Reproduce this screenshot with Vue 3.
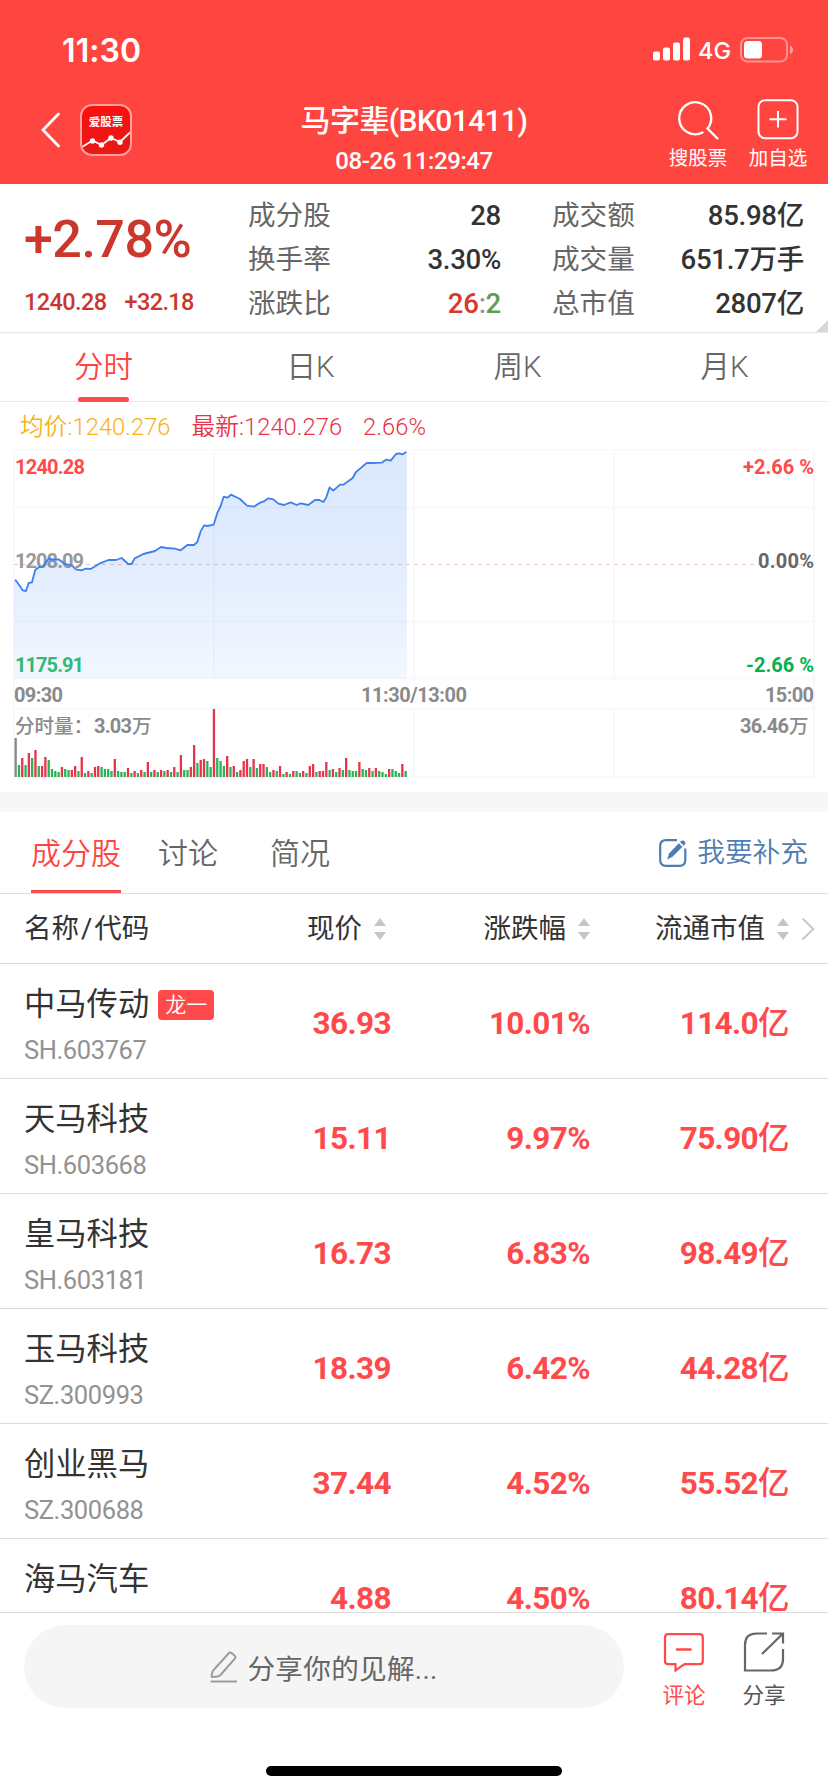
<script setup>
import { ref } from 'vue'

const periods = ['分时', '日K', '周K', '月K']
const period = ref(0)

const sections = ['成分股', '讨论', '简况']
const section = ref(0)

const columns = ['现价', '涨跌幅', '流通市值']

const stocks = [
  { name: '中马传动', tag: '龙一', code: 'SH.603767', price: '36.93', rate: '10.01%', cap: '114.0' },
  { name: '天马科技', code: 'SH.603668', price: '15.11', rate: '9.97%', cap: '75.90' },
  { name: '皇马科技', code: 'SH.603181', price: '16.73', rate: '6.83%', cap: '98.49' },
  { name: '玉马科技', code: 'SZ.300993', price: '18.39', rate: '6.42%', cap: '44.28' },
  { name: '创业黑马', code: 'SZ.300688', price: '37.44', rate: '4.52%', cap: '55.52' },
  { name: '海马汽车', price: '4.88', rate: '4.50%', cap: '80.14' },
]

// price line, in thirds of a pixel
const line = '47,541 58,556 68,571 78,573 86,549 96,547 106,509 118,501 128,500 147,475 160,479 176,478 195,492 215,496 228,508 244,511 258,506 272,507 300,490 325,480 348,480 365,474 385,492 395,492 404,475 430,462 465,453 483,441 500,444 525,446 542,451 562,435 582,435 592,426 602,394 612,376 622,378 641,374 652,339 662,318 671,290 682,293 693,284 720,297 741,317 762,320 780,308 790,305 805,295 820,298 835,311 852,315 872,307 890,315 902,310 925,315 945,300 958,300 970,306 978,294 989,262 1000,272 1020,254 1030,254 1058,234 1068,216 1080,206 1100,189 1118,189 1145,188 1158,179 1172,182 1188,162 1198,160 1208,163 1217,157'
const area = `42,835 42,541 ${line} 1221,157 1221,835`

// one bar a minute: direction + height
const bars = 'n39 g12 r19 g12 r24 g19 r27 g11 r11 r20 g17 g8 g6 g5 r10 g8 g7 r7 r11 g6 r20 g4 r6 g4 r10 r11 g10 g8 g8 g6 r18 g6 g5 g5 r9 g4 r6 g4 r7 g5 r15 g5 r7 g5 r7 g6 r7 g5 r10 g5 r22 g7 g7 r10 r32 g14 r17 r18 g16 g10 r68 g19 g16 g11 r21 g10 r11 g5 r7 r16 r18 g10 r18 g9 r13 r13 g10 g5 r7 g6 r11 g3 r5 g3 r6 g6 g4 r6 g4 r11 r13 g5 r6 r6 r15 g7 r8 g5 r9 g7 r19 g7 g6 g6 r15 g8 g7 r9 g6 r9 g6 g5 g3 r8 g8 g6 g4 r13 g6'
  .split(' ')
  .map((b, i) => ({ x: 14.5 + i * 3.305, dir: b[0], h: Number(b.slice(1)) }))
</script>


<template>
  <div class="page">
    <header class="top">
      <div class="status">
        <span class="clock">11:30</span>
        <svg class="signal" width="38" height="24" viewBox="0 0 38 24" fill="#fff">
          <rect x="0" y="14.5" width="7" height="9" rx="2" />
          <rect x="10" y="10.5" width="7" height="13" rx="2" />
          <rect x="20" y="5.5" width="7" height="18" rx="2" />
          <rect x="30" y="0.5" width="7" height="23" rx="2" />
        </svg>
        <span class="net">4G</span>
        <svg class="battery" width="54" height="26" viewBox="0 0 54 26">
          <rect x="1" y="1" width="46" height="23.5" rx="6.5" fill="none" stroke="#fff" stroke-opacity=".42" stroke-width="2" />
          <rect x="4" y="4" width="18" height="17.5" rx="3.5" fill="#fff" />
          <path d="M50 8.5c4 1.5 4 7 0 8.5z" fill="#fff" fill-opacity=".5" />
        </svg>
      </div>

      <div class="nav">
        <svg class="back" width="20" height="36" viewBox="0 0 20 36">
          <path d="M17.5 2 L2 18 L17.5 34" fill="none" stroke="#fff" stroke-width="2.8" stroke-linecap="round" />
        </svg>
        <div class="logo">
          <span>爱股票</span>
          <svg width="48" height="20" viewBox="0 0 48 20">
            <path d="M0 17 L10.5 10.5 L19.5 15 L29 8 L38 12 L48 2.5" fill="none" stroke="#fff" stroke-width="1.8" />
            <circle cx="10.5" cy="11" r="2.7" fill="#fff" />
            <circle cx="19.5" cy="15" r="2.7" fill="#fff" />
            <circle cx="29" cy="8" r="2.7" fill="#fff" />
            <circle cx="38" cy="12.3" r="2.7" fill="#fff" />
          </svg>
        </div>
        <div class="title">
          <h1>马字辈(BK01411)</h1>
          <p>08-26 11:29:47</p>
        </div>
        <div class="action">
          <svg width="44" height="42" viewBox="0 0 44 42" fill="none" stroke="#fff" stroke-width="2.3" stroke-linecap="round">
            <path d="M26.5 33.5 A16 16 0 1 1 31.5 29.5 L41.5 39.5" />
          </svg>
          <span>搜股票</span>
        </div>
        <div class="action">
          <svg width="44" height="42" viewBox="0 0 44 42" fill="none" stroke="#fff" stroke-width="2">
            <rect x="2.5" y="1.2" width="39" height="38" rx="6.5" />
            <path d="M13.5 20.3h17M22 12v16.5" />
          </svg>
          <span>加自选</span>
        </div>
      </div>
    </header>

    <section class="summary">
      <div class="quote">
        <div class="big">+2.78%</div>
        <div class="small"><span>1240.28</span><span>+32.18</span></div>
      </div>
      <dl>
        <dt>成分股</dt><dd>28</dd>
        <dt>换手率</dt><dd>3.30%</dd>
        <dt>涨跌比</dt><dd><span class="up">26</span><span class="colon">:</span><span class="down">2</span></dd>
      </dl>
      <dl class="second">
        <dt>成交额</dt><dd>85.98亿</dd>
        <dt>成交量</dt><dd>651.7万手</dd>
        <dt>总市值</dt><dd>2807亿</dd>
      </dl>
      <i class="corner"></i>
    </section>

    <nav class="periods">
      <a
        v-for="(p, i) in periods"
        :key="p"
        :class="{ active: i === period }"
        @click="period = i"
      >{{ p }}</a>
    </nav>

    <section class="chart">
      <div class="legend">
        <span class="avg">均价:1240.276</span>
        <span>最新:1240.276</span>
        <span>2.66%</span>
      </div>
      <svg width="828" height="343" viewBox="0 0 828 343">
        <defs>
          <linearGradient id="fill" x1="0" y1="0" x2="0" y2="1">
            <stop offset="0" stop-color="#3b82f6" stop-opacity=".18" />
            <stop offset=".5" stop-color="#3b82f6" stop-opacity=".15" />
            <stop offset="1" stop-color="#3b82f6" stop-opacity=".06" />
          </linearGradient>
        </defs>
        <g class="grid">
          <path d="M14 .5H814M14 58.5H814M14 172.5H814M14 229.5H814M14 259.5H814M14 328H814" />
          <path d="M14 .5V328M814 .5V328M214 .5V229M214 259V328M414 .5V229M414 259V328M614 .5V229M614 259V328" />
        </g>
        <path class="zero" d="M14 115.5H814" />
        <g class="label">
          <text x="15" y="25" textLength="70" class="red">1240.28</text>
          <text x="15" y="119" textLength="69" class="mid">1208.09</text>
          <text x="15" y="223" textLength="69" class="green">1175.91</text>
        </g>
        <g transform="translate(0 -49) scale(.33333)">
          <polygon :points="area" fill="url(#fill)" />
          <polyline :points="line" class="price" />
        </g>
        <g class="label">
          <text x="743" y="25" textLength="71" class="red">+2.66 %</text>
          <text x="758" y="119" textLength="56" class="dark">0.00%</text>
          <text x="746" y="223" textLength="68" class="green2">-2.66 %</text>
          <text x="14" y="253" textLength="49">09:30</text>
          <text x="361" y="253" textLength="106">11:30/13:00</text>
          <text x="765" y="253" textLength="49">15:00</text>
          <text x="15" y="284" class="cn">分时量：</text>
          <text x="94" y="284" textLength="38">3.03</text>
          <text x="132" y="284" class="cn">万</text>
          <text x="740" y="284" textLength="49">36.46</text>
          <text x="789" y="284" class="cn">万</text>
        </g>
        <rect
          v-for="(b, i) in bars"
          :key="i"
          :class="['bar', b.dir]"
          :x="b.x"
          :y="328 - b.h"
          width="2.3"
          :height="b.h"
        />
      </svg>
    </section>

    <div class="sections">
      <a
        v-for="(s, i) in sections"
        :key="s"
        :class="{ active: i === section }"
        @click="section = i"
      >{{ s }}</a>
      <span class="edit">
        <svg width="28" height="28" viewBox="0 0 28 28">
          <path d="M18 1.2H7Q1.2 1.2 1.2 7V21Q1.2 26.8 7 26.8H20.5Q26.3 26.8 26.3 21V9.5" fill="none" stroke="#4f7db3" stroke-width="2.2" />
          <path d="M8.2 20.5 L10 14.5 L19.8 4.3 L23.5 7.8 L13.5 17.8 Z" fill="#4f7db3" />
          <path d="M21 3 Q23.5 .5 25.8 2.5 Q27.5 4.5 24.8 6.7 Z" fill="#4f7db3" />
        </svg>
        我要补充
      </span>
    </div>

    <div class="row head">
      <span>名称<em>/</em>代码</span>
      <span v-for="c in columns" :key="c" class="sort">
        {{ c }}
        <svg width="12" height="22" viewBox="0 0 12 22" fill="#c6c6c6">
          <path d="M6 0L12 8H0zM0 14H12L6 22z" />
        </svg>
      </span>
      <svg class="more" width="14" height="24" viewBox="0 0 14 24">
        <path d="M1.5 1.5L12.3 12L1.5 22.5" fill="none" stroke="#c6c6c6" stroke-width="1.8" />
      </svg>
    </div>

    <div class="list">
      <div v-for="s in stocks" :key="s.name" class="row stock">
        <div>
          <div class="name">{{ s.name }}<b v-if="s.tag">{{ s.tag }}</b></div>
          <div v-if="s.code" class="code">{{ s.code }}</div>
        </div>
        <strong>{{ s.price }}</strong>
        <strong>{{ s.rate }}</strong>
        <strong>{{ s.cap }}<span>亿</span></strong>
      </div>
    </div>

    <footer>
      <div class="tools">
        <div class="input">
          <svg width="28" height="32" viewBox="0 0 28 32" fill="none" stroke="#999" stroke-width="1.9" stroke-linejoin="round">
            <path d="M18.5 2.5Q20 .8 21.8 2.3L24.6 4.6Q26.2 6 24.8 7.7L10.5 24Q9.5 25.3 7.5 25.5L2.5 26Q1.3 26 1.5 24.8L2.5 21Q2.8 20 3.5 19.2Z" />
            <path d="M.5 30.5H27" />
          </svg>
          分享你的见解...
        </div>
        <div class="tool red">
          <svg width="42" height="42" viewBox="0 0 42 42" fill="none" stroke="#ff4a4b" stroke-width="2.2">
            <path d="M5 2.2H36.5Q39.8 2.2 39.8 5.5V29Q39.8 32.2 36.5 32.2H21.5L12.5 38.5V32.2H5Q2 32.2 2 29V5.5Q2 2.2 5 2.2Z" />
            <path d="M14 17.5H27.5" stroke-width="2.6" stroke-linecap="round" />
          </svg>
          评论
        </div>
        <div class="tool">
          <svg width="42" height="42" viewBox="0 0 42 42" fill="none" stroke="#666" stroke-width="2.2">
            <path d="M24 1.5H13.5Q2 1.5 2 13V38.5H28Q40 38.5 40 27V17" />
            <path d="M29 1.5H40V11.5M39.5 2L19 22" />
          </svg>
          分享
        </div>
      </div>
      <i class="home"></i>
    </footer>
  </div>
</template>


<style>
body {
  margin: 0;
  background: #fff;
}
</style>

<style scoped>
* {
  box-sizing: border-box;
}

.page {
  width: 828px;
  height: 1792px;
  display: flex;
  flex-direction: column;
  overflow: hidden;
  font-family: Roboto, "Noto Sans CJK SC", sans-serif;
  color: #333;
  background: #fff;
}

svg {
  display: block;
  flex: none;
}

/* header */
.top {
  height: 184px;
  flex: none;
  background: #ff453f;
  color: #fff;
}

.status {
  height: 98px;
  padding: 0 34px 0 62px;
  display: flex;
  align-items: center;
  font-family: Inter, sans-serif;
}

.clock {
  margin-right: auto;
  font-size: 32px;
  font-weight: 600;
  line-height: 40px;
  letter-spacing: 0.1px;
  padding-top: 3px;
}

.net {
  width: 42px;
  margin-left: 7px;
  padding-top: 3px;
  font-size: 23.5px;
  font-weight: 500;
}

.battery {
  margin-top: 1px;
}

.nav {
  height: 86px;
  padding: 0 10px 0 41px;
  display: flex;
}

.back {
  margin-top: 14px;
}

.logo {
  width: 52px;
  height: 52px;
  margin: 6px 0 0 19px;
  border: 2px solid #ffa09d;
  border-radius: 12px;
  overflow: hidden;
  background: linear-gradient(#fb1010, #e81a17);
  text-align: center;
}

.logo span {
  display: block;
  margin-top: 8px;
  font-size: 11.5px;
  line-height: 16px;
  font-weight: 700;
}

.title {
  flex: 1;
  padding-left: 38px;
  text-align: center;
}

.title h1 {
  margin: 0;
  font-size: 30px;
  line-height: 46px;
  letter-spacing: -0.6px;
  font-weight: 500;
}

.title p {
  margin: 0;
  font-size: 24px;
  line-height: 34px;
  letter-spacing: -0.4px;
  font-weight: 500;
}

.action {
  width: 80px;
  display: flex;
  flex-direction: column;
  align-items: center;
  font-size: 19.5px;
  line-height: 26px;
  padding-top: 1px;
}

.action svg {
  margin-bottom: 5px;
}

/* summary */
.summary {
  position: relative;
  height: 149px;
  flex: none;
  display: flex;
  padding: 10px 24px 0 24px;
  border-bottom: 1px solid #e6e6e6;
}

.quote {
  width: 224px;
  color: #cb372d;
  font-weight: 500;
}

.big {
  margin-top: 14px;
  font-size: 52px;
  line-height: 64px;
  letter-spacing: -0.5px;
}

.small {
  margin-top: 15px;
  display: flex;
  gap: 18px;
  font-size: 23.5px;
  line-height: 30px;
  letter-spacing: -0.6px;
}

dl {
  width: 253px;
  margin: 0 51px 0 0;
  display: grid;
  grid-template-columns: auto 1fr;
  grid-auto-rows: 44px;
  font-size: 27.6px;
  line-height: 44px;
}

dl.second {
  width: 252px;
  margin-right: 0;
}

dt {
  color: #666;
}

dd {
  margin: 0;
  text-align: right;
  font-weight: 500;
  letter-spacing: -0.3px;
}

.up {
  color: #d8382c;
}

.colon {
  color: #8a9bb0;
}

.down {
  color: #5f9e50;
}

.corner {
  position: absolute;
  right: 0;
  bottom: 0;
  border: 6px solid transparent;
  border-right-color: #d8d8d8;
  border-bottom-color: #d8d8d8;
}

/* period tabs */
.periods {
  height: 69px;
  flex: none;
  display: grid;
  grid-template-columns: repeat(4, 1fr);
  border-bottom: 1px solid #e8e8e8;
}

.periods a {
  display: flex;
  flex-direction: column;
  align-items: center;
  font-size: 29.5px;
  line-height: 69px;
  font-weight: 350;
  color: #666;
}

.periods .active {
  color: #ff453f;
}

.periods .active::after {
  content: '';
  width: 51px;
  height: 5px;
  margin-top: -5px;
  border-radius: 3px;
  background: #ff4a4b;
}

/* chart */
.chart {
  height: 410px;
  flex: none;
  border-bottom: 20px solid #f7f7f7;
}

.legend {
  height: 47px;
  padding-left: 20px;
  display: flex;
  gap: 21px;
  font-size: 23.7px;
  line-height: 50px;
  font-weight: 350;
  letter-spacing: 0.05px;
  color: #e8334a;
}

.avg {
  color: #fbb116;
}

.grid path {
  fill: none;
  stroke: #f6f8f9;
  stroke-width: 1.5;
}

.zero {
  stroke: #ecc9c7;
  stroke-dasharray: 4 4;
}

.price {
  fill: none;
  stroke: #3f80ee;
  stroke-width: 5.5;
  stroke-linejoin: round;
  stroke-linecap: round;
}

.label {
  font-size: 20px;
  font-weight: 700;
  fill: #8a8a8a;
}

.label .red { fill: #ff4a4b; }
.label .mid { fill: #999; }
.label .green { fill: #2fbd6e; }
.label .green2 { fill: #05b04c; }
.label .dark { fill: #666; }
.label .cn {
  font-size: 19.5px;
  font-weight: 500;
}

.bar.r { fill: #e8334a; }
.bar.g { fill: #2bb35a; }
.bar.n { fill: #888; }

/* section tabs */
.sections {
  height: 82px;
  flex: none;
  display: flex;
  padding: 0 20px 0 31px;
  border-bottom: 1px solid #dcdcdc;
  font-size: 30px;
  line-height: 84px;
  font-weight: 350;
  color: #666;
}

.sections a {
  height: 81px;
  margin-right: 52px;
}

.sections .active {
  margin-right: 37px;
  color: #ff453f;
  border-bottom: 3px solid #ff4a4b;
}

.edit {
  margin-left: auto;
  display: flex;
  align-items: center;
  gap: 10px;
  font-size: 27.7px;
  color: #4f7db3;
}

/* table */
.row {
  display: grid;
  grid-template-columns: 226px 141px 199px 199px auto;
  padding-left: 24px;
  border-bottom: 1px solid #dcdcdc;
}

.head {
  height: 70px;
  flex: none;
  align-items: center;
  font-size: 27.5px;
  line-height: 69px;
}

.head em {
  margin: 0 2px;
  font-style: normal;
}

.sort {
  display: flex;
  align-items: center;
  justify-content: flex-end;
  gap: 12px;
  white-space: nowrap;
}

.sort:nth-child(2) {
  padding-right: 5px;
}

.more {
  margin-left: 12px;
}

.list {
  height: 648px;
  flex: none;
  overflow: hidden;
}

.stock {
  height: 115px;
}

.name {
  display: flex;
  align-items: center;
  margin-top: 20px;
  font-size: 31.3px;
  line-height: 42px;
  white-space: nowrap;
}

.name b {
  width: 56px;
  height: 30px;
  margin-left: 9px;
  border-radius: 4px;
  background: #ff4a4b;
  color: #fff;
  font-size: 21px;
  line-height: 30px;
  font-weight: 350;
  text-align: center;
}

.code {
  margin-top: 6px;
  font-size: 25.5px;
  line-height: 36px;
  letter-spacing: -0.4px;
  color: #929292;
}

strong {
  padding-top: 36px;
  font-size: 31.5px;
  line-height: 48px;
  letter-spacing: -0.6px;
  text-align: right;
  color: #ff4a4b;
  white-space: nowrap;
}

strong span {
  font-weight: 500;
}

/* bottom bar */
footer {
  height: 180px;
  flex: none;
  display: flex;
  flex-direction: column;
  align-items: center;
  justify-content: space-between;
  padding: 12px 0 16px;
  border-top: 1px solid #dcdcdc;
  background: #fff;
}

.tools {
  width: 100%;
  padding-left: 24px;
  display: flex;
}

.input {
  width: 600px;
  height: 83px;
  margin-right: 20px;
  display: flex;
  align-items: center;
  justify-content: center;
  gap: 9px;
  border-radius: 42px;
  background: #f5f5f5;
  color: #666;
  font-size: 27.6px;
  letter-spacing: 0.3px;
}

.tool {
  width: 80px;
  display: flex;
  flex-direction: column;
  align-items: center;
  padding-top: 7px;
  font-size: 21.5px;
  line-height: 30px;
  color: #555;
}

.tool svg {
  margin-bottom: 7px;
}

.tool.red {
  color: #ff4a4b;
}

.home {
  width: 296px;
  height: 10px;
  border-radius: 5px;
  background: #000;
}
</style>
